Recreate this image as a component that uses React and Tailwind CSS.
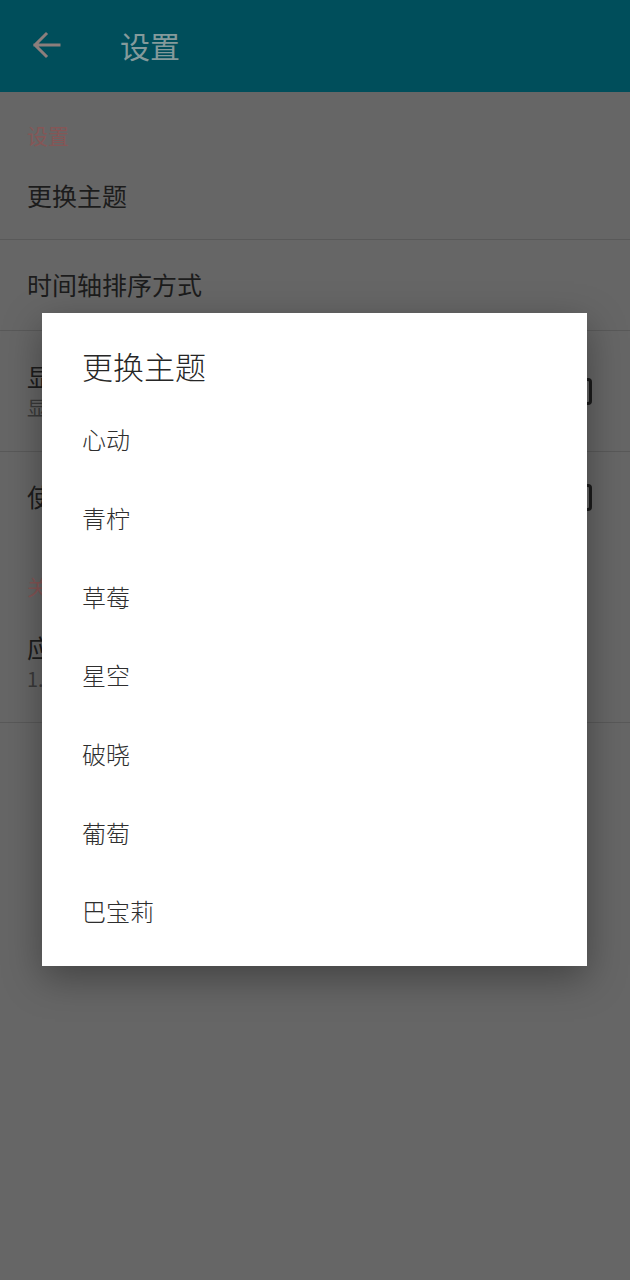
import React from "react";

const font = { fontFamily: '"Noto Sans CJK SC", "Noto Sans", sans-serif' };

function Checkbox() {
  return <div className="w-[26px] h-[27px] border-[3px] border-[#1c1c1c] rounded-[4px] shrink-0" />;
}

export default function App() {
  const themes = ["心动", "青柠", "草莓", "星空", "破晓", "葡萄", "巴宝莉"];
  return (
    <div
      className="relative w-[630px] h-[1280px] bg-[#666666] overflow-hidden"
      style={font}
    >
      {/* Top app bar */}
      <div className="h-[92px] bg-[#004e5b] flex items-center">
        <svg width="40" height="40" viewBox="0 0 40 40" className="ml-[27px] -mt-[2px]">
          <path
            d="M32 20 H8 M19 9 L8 20 L19 31"
            fill="none"
            stroke="#8c7e7c"
            strokeWidth="3"
            strokeLinecap="square"
          />
        </svg>
        <div className="ml-[53px] -mt-[2px] text-[30px] leading-[40px] text-[#849a9b]">设置</div>
      </div>

      {/* Settings list */}
      <div className="flex flex-col">
        <div className="h-[60px] pt-[29px] px-[27px] text-[21px] leading-[28px] text-[#855656]">设置</div>
        <div className="h-[88px] px-[27px] flex items-center text-[25px] text-[#1c1c1c] border-b border-[#595959]">
          更换主题
        </div>
        <div className="h-[91px] px-[27px] flex items-center text-[25px] text-[#1c1c1c] border-b border-[#595959]">
          时间轴排序方式
        </div>
        <div className="h-[121px] pl-[27px] pr-[38px] flex items-center border-b border-[#595959]">
          <div className="flex-1 flex flex-col">
            <div className="text-[25px] leading-[32px] text-[#1c1c1c]">显示农历</div>
            <div className="mt-[2px] text-[20px] leading-[28px] text-[#3a3a3a]">显示农历日期</div>
          </div>
          <Checkbox />
        </div>
        <div className="h-[90px] pl-[27px] pr-[38px] flex items-center">
          <div className="flex-1 text-[25px] text-[#1c1c1c]">使用系统字体</div>
          <Checkbox />
        </div>
        <div className="h-[60px] pt-[30px] px-[27px] text-[21px] leading-[28px] text-[#855656]">关于</div>
        <div className="h-[121px] px-[27px] flex flex-col justify-center border-b border-[#595959]">
          <div className="text-[25px] leading-[32px] text-[#1c1c1c]">应用版本</div>
          <div className="mt-[2px] text-[20px] leading-[28px] text-[#3a3a3a]">1.0.0</div>
        </div>
      </div>

      {/* Dialog */}
      <div className="absolute left-[42px] top-[313px] w-[545px] h-[653px] bg-white shadow-[0_12px_36px_rgba(0,0,0,0.35)] pt-[33px] pb-[11px]">
        <div className="px-[40px] text-[31px] leading-[40px] text-[#262626] font-light">更换主题</div>
        <div className="mt-[14px] flex flex-col">
          {themes.map((t) => (
            <div key={t} className="h-[78.7px] px-[40px] flex items-center text-[24px] text-[#2e2e2e] font-light">
              {t}
            </div>
          ))}
        </div>
      </div>
    </div>
  );
}
